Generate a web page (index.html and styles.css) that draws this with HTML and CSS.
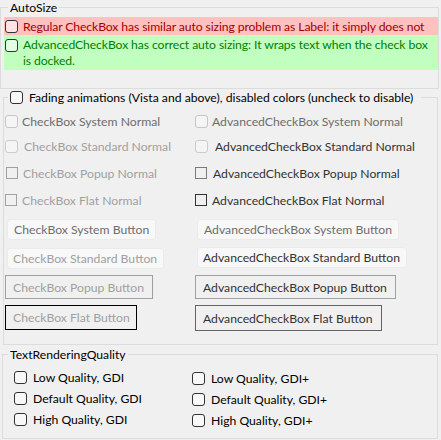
FILE: index.html
```html
<!DOCTYPE html>
<html lang="en">
<head>
    <meta charset="UTF-8">
    <meta name="viewport" content="width=device-width, initial-scale=1.0">
    <title>AdvancedCheckBox Test</title>
    <link rel="stylesheet" href="styles.css">
</head>
<body>
    <fieldset class="Group Group-AutoSize">
        <legend>AutoSize</legend>
        <div class="Auto-Row Auto-Red">
            <span class="Box"></span>
            <span class="Auto-Text">Regular CheckBox has similar auto sizing problem as Label: it simply does not</span>
        </div>
        <div class="Auto-Row Auto-Green">
            <span class="Box"></span>
            <span class="Auto-Text">AdvancedCheckBox has correct auto sizing: It wraps text when the check box<br>is docked.</span>
        </div>
    </fieldset>

    <fieldset class="Group Group-Fading">
        <legend><span class="Box"></span>Fading animations (Vista and above), disabled colors (uncheck to disable)</legend>
        <div class="Row Row-1">
            <div class="Cell"><div class="Check Check-System Text-System"><span class="Box Box-System"></span>CheckBox System Normal</div></div>
            <div class="Cell"><div class="Check Check-System Text-System"><span class="Box Box-System"></span>AdvancedCheckBox System Normal</div></div>
        </div>
        <div class="Row Row-2">
            <div class="Cell"><div class="Check Check-Standard Text-Off"><span class="Box Box-Standard"></span>CheckBox Standard Normal</div></div>
            <div class="Cell"><div class="Check Check-Standard-Adv Text-On"><span class="Box Box-Standard"></span>AdvancedCheckBox Standard Normal</div></div>
        </div>
        <div class="Row Row-3">
            <div class="Cell"><div class="Check Check-Popup Text-Off"><span class="Box Box-Square"></span>CheckBox Popup Normal</div></div>
            <div class="Cell"><div class="Check Check-Popup-Adv Text-On"><span class="Box Box-Square Box-Popup-On"></span>AdvancedCheckBox Popup Normal</div></div>
        </div>
        <div class="Row Row-4">
            <div class="Cell"><div class="Check Check-Flat Text-Off"><span class="Box Box-Square"></span>CheckBox Flat Normal</div></div>
            <div class="Cell"><div class="Check Check-Flat-Adv Text-On"><span class="Box Box-Square Box-Flat-On"></span>AdvancedCheckBox Flat Normal</div></div>
        </div>
        <div class="Row Row-5">
            <div class="Cell"><div class="Btn Btn-System Text-System">CheckBox System Button</div></div>
            <div class="Cell"><div class="Btn Btn-System Text-System">AdvancedCheckBox System Button</div></div>
        </div>
        <div class="Row Row-6">
            <div class="Cell"><div class="Btn Btn-System Btn-Standard Text-Off">CheckBox Standard Button</div></div>
            <div class="Cell Cell-Up"><div class="Btn Btn-System Btn-Standard Text-On">AdvancedCheckBox Standard Button</div></div>
        </div>
        <div class="Row Row-7">
            <div class="Cell"><div class="Btn Btn-Popup Text-Off">CheckBox Popup Button</div></div>
            <div class="Cell"><div class="Btn Btn-Popup Text-On">AdvancedCheckBox Popup Button</div></div>
        </div>
        <div class="Row Row-8">
            <div class="Cell"><div class="Btn Btn-Flat Text-Off">CheckBox Flat Button</div></div>
            <div class="Cell"><div class="Btn Btn-Flat Btn-Flat-On Text-On">AdvancedCheckBox Flat Button</div></div>
        </div>
    </fieldset>

    <fieldset class="Group Group-Quality">
        <legend>TextRenderingQuality</legend>
        <div class="Quality-Grid">
            <div class="Quality-Col">
                <div class="Check Quality-Item"><span class="Box"></span>Low Quality, GDI</div>
                <div class="Check Quality-Item"><span class="Box"></span>Default Quality, GDI</div>
                <div class="Check Quality-Item"><span class="Box"></span>High Quality, GDI</div>
            </div>
            <div class="Quality-Col Quality-Col-Right">
                <div class="Check Quality-Item"><span class="Box"></span>Low Quality, GDI+</div>
                <div class="Check Quality-Item"><span class="Box"></span>Default Quality, GDI+</div>
                <div class="Check Quality-Item"><span class="Box"></span>High Quality, GDI+</div>
            </div>
        </div>
    </fieldset>
</body>
</html>
```

FILE: styles.css
```css
body {
    margin: 0;
    width: 441px;
    height: 440px;
    overflow: hidden;
    background-color: #f0f0f0;
    font-family: Lato, "Open Sans", sans-serif;
    font-size: 12.2px;
    color: #000000;
}

.Group {
    margin: 0;
    min-width: 0;
    box-sizing: border-box;
    border: 1px solid #dcdcdc;
}

.Group legend {
    line-height: 15px;
    padding: 0 2px;
    display: flex;
    align-items: center;
    white-space: nowrap;
}

/* AutoSize */
.Group-AutoSize {
    width: 439px;
    padding: 2px 0 18px 3px;
}

.Group-AutoSize legend {
    margin-left: 4px;
}

.Auto-Row {
    display: flex;
    align-items: flex-start;
    gap: 5px;
    padding-left: 1px;
}

.Auto-Red {
    height: 18px;
    background-color: #ffc0c0;
    color: #a00000;
    align-items: center;
    overflow: hidden;
    white-space: nowrap;
}

.Auto-Green {
    height: 35px;
    padding-top: 2px;
    box-sizing: border-box;
    background-color: #c0ffc0;
    color: #008000;
    line-height: 16px;
    white-space: nowrap;
}

.Auto-Text {
    letter-spacing: -0.1px;
}

.Auto-Green .Box {
    margin-top: 2px;
}

/* check boxes */
.Box {
    flex: none;
    width: 13px;
    height: 13px;
    box-sizing: border-box;
    border: 1px solid #333333;
    border-radius: 3px;
    background-color: rgba(255, 255, 255, 0.55);
}

.Box-System {
    border-color: #c6c6c6;
    background-color: #f5f5f5;
}

.Box-Standard {
    border-color: #cccccc;
    background-color: #f5f5f5;
}

.Box-Square {
    width: 12px;
    height: 12px;
    border-radius: 0;
    border-color: #a0a0a0;
    background-color: transparent;
}

.Box-Popup-On {
    border-color: #7a7a7a;
}

.Box-Flat-On {
    border-color: #333333;
}

.Check {
    display: flex;
    align-items: center;
    height: 18px;
    white-space: nowrap;
}

.Check-System { gap: 4px; }
.Check-Standard { gap: 6px; }
.Check-Standard-Adv { gap: 7px; }
.Check-Popup { gap: 5px; padding-left: 1px; }
.Check-Popup-Adv { gap: 6px; }
.Check-Flat { gap: 5px; }
.Check-Flat-Adv { gap: 5px; }

.Text-System { color: #6d6d6d; }
.Text-Off { color: #a0a0a0; }
.Text-On { color: #333333; }

/* Fading group */
.Group-Fading {
    width: 435px;
    margin: 1px 0 0 3px;
    padding: 7px 0 14px 1px;
}

.Group-Fading legend {
    margin-left: 3px;
    padding-right: 8px;
    gap: 6px;
}

.Row {
    display: flex;
    align-items: flex-start;
}

.Cell {
    width: 190px;
    flex: none;
}

.Cell-Up {
    margin-top: -1px;
}

.Row-1 { height: 25px; }
.Row-2 { height: 27px; }
.Row-3 { height: 27px; }
.Row-4 { height: 28px; }
.Row-5 { height: 29px; }
.Row-6 { height: 27px; }
.Row-7 { height: 30px; }
.Row-8 { height: 25px; }

.Btn {
    display: inline-flex;
    align-items: center;
    box-sizing: border-box;
    white-space: nowrap;
}

.Btn-System {
    height: 21px;
    margin-left: 2px;
    padding: 0 6px 0 6px;
    background-color: #f8f8f8;
    border: 1px solid #ebebeb;
    border-radius: 3px;
}

.Btn-Standard {
    padding: 0 6px 0 5px;
}

.Btn-Popup {
    height: 24px;
    padding: 0 8px 0 7px;
    border: 1px solid #a0a0a0;
}

.Btn-Flat {
    height: 25px;
    padding: 0 6px 0 7px;
    border: 1px solid #000000;
}

.Btn-Flat-On {
    height: 26px;
    padding-right: 8px;
    border-color: #646464;
}

/* TextRenderingQuality */
.Group-Quality {
    width: 436px;
    margin: 2px 0 0 2px;
    padding: 5px 0 8px 11px;
}

.Group-Quality legend {
    margin-left: -6px;
}

.Quality-Grid {
    display: grid;
    grid-template-columns: 178px auto;
}

.Quality-Col-Right {
    padding-top: 1px;
}

.Quality-Item {
    height: 20px;
    gap: 6px;
}

.Quality-Item + .Quality-Item {
    margin-top: 1px;
}
```
